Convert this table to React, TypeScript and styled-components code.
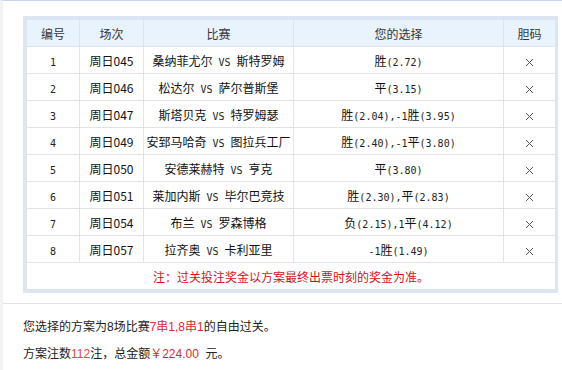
import styled, { createGlobalStyle } from 'styled-components';

const GlobalStyle = createGlobalStyle`
  html, body {
    margin: 0;
    padding: 0;
    background: #ffffff;
  }
  body {
    font-family: "Noto Sans CJK SC", "Liberation Sans", sans-serif;
    font-size: 12px;
    color: #222;
  }
`;

const Page = styled.div`
  width: 562px;
  height: 370px;
  box-sizing: border-box;
  border-top: 1px solid #c7d7ed;
  border-left: 3px solid #f2f2f2;
  overflow: hidden;
`;

const TableBox = styled.div`
  margin: 15px 0 0 20px;
  width: 535px;
  box-sizing: border-box;
  padding: 3px;
  background: #dbe5f3;
`;

const Table = styled.table`
  width: 529px;
  border-collapse: collapse;
  table-layout: fixed;
  background: #fff;
  border: 1px solid #c9d4e4;
`;

const Th = styled.th`
  height: 26px;
  padding: 0;
  font-weight: normal;
  color: #333;
  background: #e9f3fd;
  border: 1px solid #dfe4ea;
  text-align: center;
`;

const Td = styled.td<{ $note?: boolean }>`
  height: 26px;
  padding: 0;
  border: 1px solid #e0e3e7;
  text-align: center;
  color: ${(p) => (p.$note ? '#d0161b' : '#111')};
  white-space: nowrap;
`;

// half-width latin run, like a SimSun page
const Mono = styled.span`
  font-family: "DejaVu Sans Mono", "Liberation Mono", monospace;
  font-size: 10px;
  color: #222;
`;

const Footer = styled.div`
  margin-top: 10px;
  border-top: 1px solid #e2e2e2;
  padding: 10px 0 0 20px;
  line-height: 27px;
  color: #222;
  font-family: "Liberation Sans", "Noto Sans CJK SC", sans-serif;
`;

const Red = styled.span<{ $light?: boolean }>`
  color: ${(p) => (p.$light ? '#e0454a' : '#d92b31')};
`;

const CrossIcon = () => (
  <svg width="9" height="9" viewBox="0 0 9 9" style={{ display: 'inline-block', verticalAlign: 'middle' }}>
    <path d="M1 1 L8 8 M8 1 L1 8" stroke="#555" strokeWidth="1" fill="none" />
  </svg>
);

// split text into CJK / latin runs so latin gets the narrow mono face
const mixed = (text: string) =>
  text.split(/([\x20-\x7e]+)/).filter(Boolean).map((part, i) =>
    /^[\x20-\x7e]+$/.test(part) ? <Mono key={i}>{part.replace(/ /g, '\u00a0')}</Mono> : <span key={i}>{part}</span>
  );

const rows = [
  ['1', '周日045', '桑纳菲尤尔 VS 斯特罗姆', '胜(2.72)'],
  ['2', '周日046', '松达尔 VS 萨尔普斯堡', '平(3.15)'],
  ['3', '周日047', '斯塔贝克 VS 特罗姆瑟', '胜(2.04),-1胜(3.95)'],
  ['4', '周日049', '安郅马哈奇 VS 图拉兵工厂', '胜(2.40),-1平(3.80)'],
  ['5', '周日050', '安德莱赫特 VS 亨克', '平(3.80)'],
  ['6', '周日051', '莱加内斯 VS 毕尔巴竞技', '胜(2.30),平(2.83)'],
  ['7', '周日054', '布兰 VS 罗森博格', '负(2.15),1平(4.12)'],
  ['8', '周日057', '拉齐奥 VS 卡利亚里', '-1胜(1.49)'],
];

export default function App() {
  return (
    <>
      <GlobalStyle />
      <Page>
        <TableBox>
          <Table>
            <colgroup>
              <col style={{ width: 53 }} />
              <col style={{ width: 64 }} />
              <col style={{ width: 150 }} />
              <col style={{ width: 210 }} />
              <col style={{ width: 52 }} />
            </colgroup>
            <thead>
              <tr>
                <Th>编号</Th>
                <Th>场次</Th>
                <Th>比赛</Th>
                <Th>您的选择</Th>
                <Th>胆码</Th>
              </tr>
            </thead>
            <tbody>
              {rows.map((r) => (
                <tr key={r[0]}>
                  <Td>{mixed(r[0])}</Td>
                  <Td>{r[1]}</Td>
                  <Td>{mixed(r[2])}</Td>
                  <Td>{mixed(r[3])}</Td>
                  <Td>
                    <CrossIcon />
                  </Td>
                </tr>
              ))}
              <tr>
                <Td $note colSpan={5}>注：过关投注奖金以方案最终出票时刻的奖金为准。</Td>
              </tr>
            </tbody>
          </Table>
        </TableBox>
        <Footer>
          <div>
            您选择的方案为8场比赛<Red>7串1,8串1</Red>的自由过关。
          </div>
          <div>
            方案注数<Red $light>112</Red>注，总金额<Red>￥224.00</Red>{'\u00a0\u00a0'}元。
          </div>
        </Footer>
      </Page>
    </>
  );
}
